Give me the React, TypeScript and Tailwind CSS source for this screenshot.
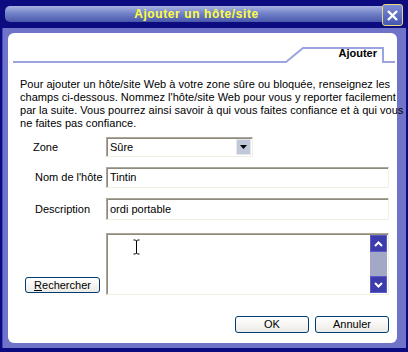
import React from 'react';

const sunken =
  'border border-t-[#aca899] border-l-[#aca899] border-r-[#f1efe2] border-b-[#f1efe2] shadow-[inset_1px_1px_0_#8e8b7e] bg-white';

const xpButton =
  'rounded-[3px] border border-[#003c74] bg-gradient-to-b from-[#ffffff] to-[#ecebe6] text-[11px] leading-none text-black flex items-center justify-center';

const TabStrip: React.FC = () => (
  <div className="relative h-[32px]">
    <svg className="absolute inset-0" width="389" height="32" viewBox="0 0 389 32">
      <path
        d="M5 29 H278 L295 15 H375 V29 H387"
        fill="none"
        stroke="#9ca4e0"
        strokeWidth="2"
      />
    </svg>
    <div className="relative flex justify-end pr-[20px] pt-[14px] text-[11px] font-bold leading-[13px]">
      Ajouter
    </div>
  </div>
);

const ScrollArrow: React.FC<{ up?: boolean }> = ({ up }) => (
  <div className="w-[17px] h-[17px] bg-[#3c3caa] flex items-center justify-center border border-[#5a5ac8]">
    <svg width="9" height="6" viewBox="0 0 9 6">
      <path
        d={up ? 'M1 5 L4.5 1.5 L8 5' : 'M1 1 L4.5 4.5 L8 1'}
        fill="none"
        stroke="#ffffff"
        strokeWidth="2"
      />
    </svg>
  </div>
);

export default function App() {
  return (
    <div className="w-[408px] h-[352px] bg-[#0c0c80] overflow-hidden flex flex-col font-['Liberation_Sans',Arial,sans-serif] text-black">
      {/* title */}
      <div className="h-[28px] flex items-start pl-[5px] pr-[5px]">
        <div className="mt-[6px] w-[377px] h-[16px] rounded-l-[5px] bg-gradient-to-b from-[#a8b2e2] via-[#6f7fc6] to-[#4a58aa] flex items-center justify-center pl-[6px]">
          <span className="text-[12px] font-bold tracking-[0.6px] text-[#ffff40] leading-none">
            Ajouter un hôte/site
          </span>
        </div>
        <div className="mt-[4px] w-[21px] h-[22px] rounded-[3px] border border-[#e8d878] bg-gradient-to-b from-[#7d8cd6] to-[#4656b2] flex items-center justify-center">
          <svg width="13" height="13" viewBox="0 0 13 13">
            <path d="M2 2 L11 11 M11 2 L2 11" stroke="#ffffff" strokeWidth="2.4" />
          </svg>
        </div>
      </div>

      {/* frame */}
      <div className="mx-[2px] h-[320px] border-l border-[#4646c0] bg-[#7074c8] pl-[5px] pr-[8px] pt-[5px] pb-[5px] flex">
        <div className="w-[389px] h-[310px] bg-white rounded-[6px] flex flex-col">
          <TabStrip />

          <p className="mt-[13px] pl-[12px] text-[11px] leading-[13px] tracking-[0.03px] whitespace-nowrap">
            Pour ajouter un hôte/site Web à votre zone sûre ou bloquée, renseignez les
            <br />
            champs ci-dessous. Nommez l'hôte/site Web pour vous y reporter facilement
            <br />
            par la suite. Vous pourrez ainsi savoir à qui vous faites confiance et à qui vous
            <br />
            ne faites pas confiance.
          </p>

          <div className="mt-[7px] flex flex-col text-[11px]">
            <div className="flex items-center h-[20px]">
              <span className="w-[98px] pl-[25px]">Zone</span>
              <div className={`${sunken} w-[147px] h-[20px] flex items-center justify-between pl-[3px] pr-[1px]`}>
                <span>Sûre</span>
                <div className="w-[15px] h-[16px] bg-[#c1c9d8] border border-[#e4e8f0] flex items-center justify-center">
                  <svg width="7" height="4" viewBox="0 0 7 4">
                    <path d="M0 0 H7 L3.5 4 Z" fill="#000000" />
                  </svg>
                </div>
              </div>
            </div>

            <div className="flex items-center h-[21px] mt-[10px]">
              <span className="w-[98px] pl-[27px] whitespace-nowrap">Nom de l'hôte</span>
              <div className={`${sunken} w-[283px] h-[21px] flex items-center pl-[3px]`}>Tintin</div>
            </div>

            <div className="flex items-center h-[22px] mt-[10px]">
              <span className="w-[98px] pl-[27px]">Description</span>
              <div className={`${sunken} w-[283px] h-[22px] flex items-center pl-[3px]`}>ordi portable</div>
            </div>

            <div className="flex items-end h-[62px] mt-[13px]">
              <div className="w-[98px] pl-[17px] pb-[2px]">
                <button className={`${xpButton} w-[75px] h-[16px]`}>
                  <span>
                    <span className="underline">R</span>echercher
                  </span>
                </button>
              </div>
              <div className={`${sunken} relative w-[283px] h-[62px] flex justify-end pt-[1px] pr-[1px] pb-[1px]`}>
                <svg className="absolute left-[26px] top-[5px]" width="7" height="16" viewBox="0 0 7 16">
                  <path d="M0.5 1 H2.5 L3.5 2 L4.5 1 H6.5 M3.5 2 V14 M0.5 15 H2.5 L3.5 14 L4.5 15 H6.5" fill="none" stroke="#000000" strokeWidth="1" />
                </svg>
                <div className="w-[17px] h-full bg-[#a2a8c6] flex flex-col justify-between">
                  <ScrollArrow up />
                  <ScrollArrow />
                </div>
              </div>
            </div>
          </div>

          <div className="mt-[21px] flex justify-end gap-[6px] pr-[8px]">
            <button className={`${xpButton} w-[74px] h-[17px]`}>OK</button>
            <button className={`${xpButton} w-[74px] h-[17px]`}>Annuler</button>
          </div>
        </div>
      </div>
    </div>
  );
}
